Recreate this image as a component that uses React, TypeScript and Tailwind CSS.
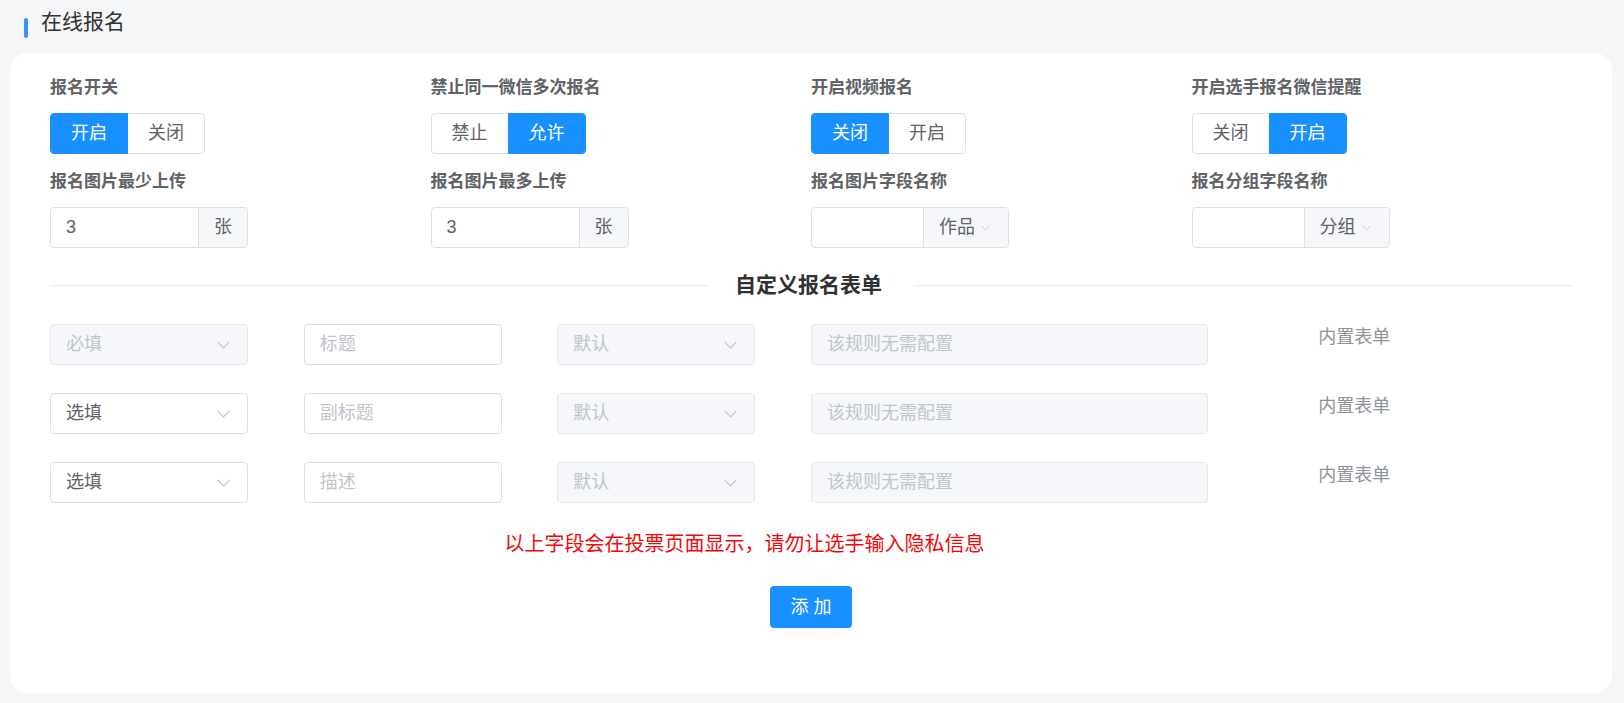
import { useState } from "react";

const FONT = { fontFamily: '"Liberation Sans", "Noto Sans CJK SC", sans-serif' };

function Chevron({ className = "w-[13px] h-[8px]" }: { className?: string }) {
  return (
    <svg viewBox="0 0 13 8" className={className} fill="none">
      <polyline points="0.6,0.8 6.5,7 12.4,0.8" stroke="#c0c4cc" strokeWidth="1.1" />
    </svg>
  );
}

interface RadioGroupProps {
  options: string[];
  value: number;
}

function RadioGroup({ options, value }: RadioGroupProps) {
  const [active, setActive] = useState(value);
  return (
    <div className="flex">
      {options.map((opt, i) => (
        <button
          key={opt}
          onClick={() => setActive(i)}
          className={
            "w-[78px] h-[41px] text-[18px] border " +
            (i === 0 ? "rounded-l-[4px] " : "rounded-r-[4px] -ml-px ") +
            (i === active
              ? "bg-[#1890ff] border-[#1890ff] text-white relative z-10"
              : "bg-white border-[#dcdfe6] text-[#606266]")
          }
        >
          {opt}
        </button>
      ))}
    </div>
  );
}

function Label({ children }: { children: string }) {
  return <div className="text-[17px] leading-[24px] font-bold text-[#606266] mb-[13px]">{children}</div>;
}

function UnitInput({ value, unit }: { value: string; unit: string }) {
  return (
    <div className="flex w-[198px] h-[41px] border border-[#dcdfe6] rounded-[4px] overflow-hidden">
      <div className="flex-1 flex items-center pl-[15px] text-[18px] text-[#606266]">{value}</div>
      <div className="w-[49px] flex items-center justify-center bg-[#f5f7fa] border-l border-[#dcdfe6] text-[18px] text-[#606266]">
        {unit}
      </div>
    </div>
  );
}

function SelectInput({ unit }: { unit: string }) {
  return (
    <div className="flex w-[198px] h-[41px] border border-[#dcdfe6] rounded-[4px] overflow-hidden">
      <div className="flex-1" />
      <div className="w-[85px] flex items-center pl-[15px] gap-[6px] bg-[#f5f7fa] border-l border-[#dcdfe6] text-[18px] text-[#606266]">
        {unit}
        <Chevron className="w-[9px] h-[6px]" />
      </div>
    </div>
  );
}

function Select({ text, disabled }: { text: string; disabled?: boolean }) {
  return (
    <div
      className={
        "w-[198px] h-[41px] flex items-center justify-between pl-[15px] pr-[17px] border rounded-[4px] text-[18px] " +
        (disabled ? "bg-[#f5f7fa] border-[#e4e7ed] text-[#c0c4cc]" : "bg-white border-[#dcdfe6] text-[#606266]")
      }
    >
      <span>{text}</span>
      <Chevron />
    </div>
  );
}

function TextInput({ placeholder, disabled, wide }: { placeholder: string; disabled?: boolean; wide?: boolean }) {
  return (
    <div
      className={
        "h-[41px] flex items-center pl-[15px] border rounded-[4px] text-[18px] text-[#c0c4cc] " +
        (wide ? "w-[397px] " : "w-[198px] ") +
        (disabled ? "bg-[#f5f7fa] border-[#e4e7ed]" : "bg-white border-[#dcdfe6]")
      }
    >
      {placeholder}
    </div>
  );
}

const rows = [
  { req: "必填", reqDisabled: true, name: "标题" },
  { req: "选填", reqDisabled: false, name: "副标题" },
  { req: "选填", reqDisabled: false, name: "描述" },
];

export default function App() {
  return (
    <div className="w-[1624px] h-[703px] bg-[#f5f6f8] overflow-hidden" style={FONT}>
      {/* header */}
      <div className="h-[53px] flex items-start pl-[24px]">
        <div className="w-[4px] h-[20px] mt-[18px] rounded-full bg-[#3d8ef7]" />
        <div className="ml-[13px] mt-[8px] text-[21px] leading-[28px] text-[#303133]">在线报名</div>
      </div>

      {/* card */}
      <div className="ml-[10px] w-[1602px] h-[640px] bg-white rounded-[18px] px-[40px] pt-[23px]">
        <div className="grid grid-cols-4">
          <div>
            <Label>报名开关</Label>
            <RadioGroup options={["开启", "关闭"]} value={0} />
          </div>
          <div>
            <Label>禁止同一微信多次报名</Label>
            <RadioGroup options={["禁止", "允许"]} value={1} />
          </div>
          <div>
            <Label>开启视频报名</Label>
            <RadioGroup options={["关闭", "开启"]} value={0} />
          </div>
          <div>
            <Label>开启选手报名微信提醒</Label>
            <RadioGroup options={["关闭", "开启"]} value={1} />
          </div>
        </div>

        <div className="grid grid-cols-4 mt-[16px]">
          <div>
            <Label>报名图片最少上传</Label>
            <UnitInput value="3" unit="张" />
          </div>
          <div>
            <Label>报名图片最多上传</Label>
            <UnitInput value="3" unit="张" />
          </div>
          <div>
            <Label>报名图片字段名称</Label>
            <SelectInput unit="作品" />
          </div>
          <div>
            <Label>报名分组字段名称</Label>
            <SelectInput unit="分组" />
          </div>
        </div>

        {/* divider */}
        <div className="flex items-center mt-[22px] h-[30px]">
          <div className="flex-1 h-px bg-[#e8eaef]" />
          <div className="pl-[27px] pr-[32px] text-[21px] font-bold text-[#303133]">自定义报名表单</div>
          <div className="flex-1 h-px bg-[#e8eaef]" />
        </div>

        {/* custom fields */}
        <div className="mt-[24px] flex flex-col gap-[28px]">
          {rows.map((r) => (
            <div key={r.name} className="grid grid-cols-6">
              <Select text={r.req} disabled={r.reqDisabled} />
              <TextInput placeholder={r.name} />
              <Select text="默认" disabled />
              <div className="col-span-2">
                <TextInput placeholder="该规则无需配置" disabled wide />
              </div>
              <div className="text-[18px] leading-[26px] text-[#909399]">内置表单</div>
            </div>
          ))}
        </div>

        <div className="mt-[27px] pr-[133px] text-center text-[20px] leading-[28px] text-[#ee0a0a]">
          以上字段会在投票页面显示，请勿让选手输入隐私信息
        </div>

        <div className="mt-[28px] flex justify-center">
          <button className="w-[82px] h-[42px] rounded-[4px] bg-[#1890ff] text-white text-[18px]">添 加</button>
        </div>
      </div>
    </div>
  );
}
